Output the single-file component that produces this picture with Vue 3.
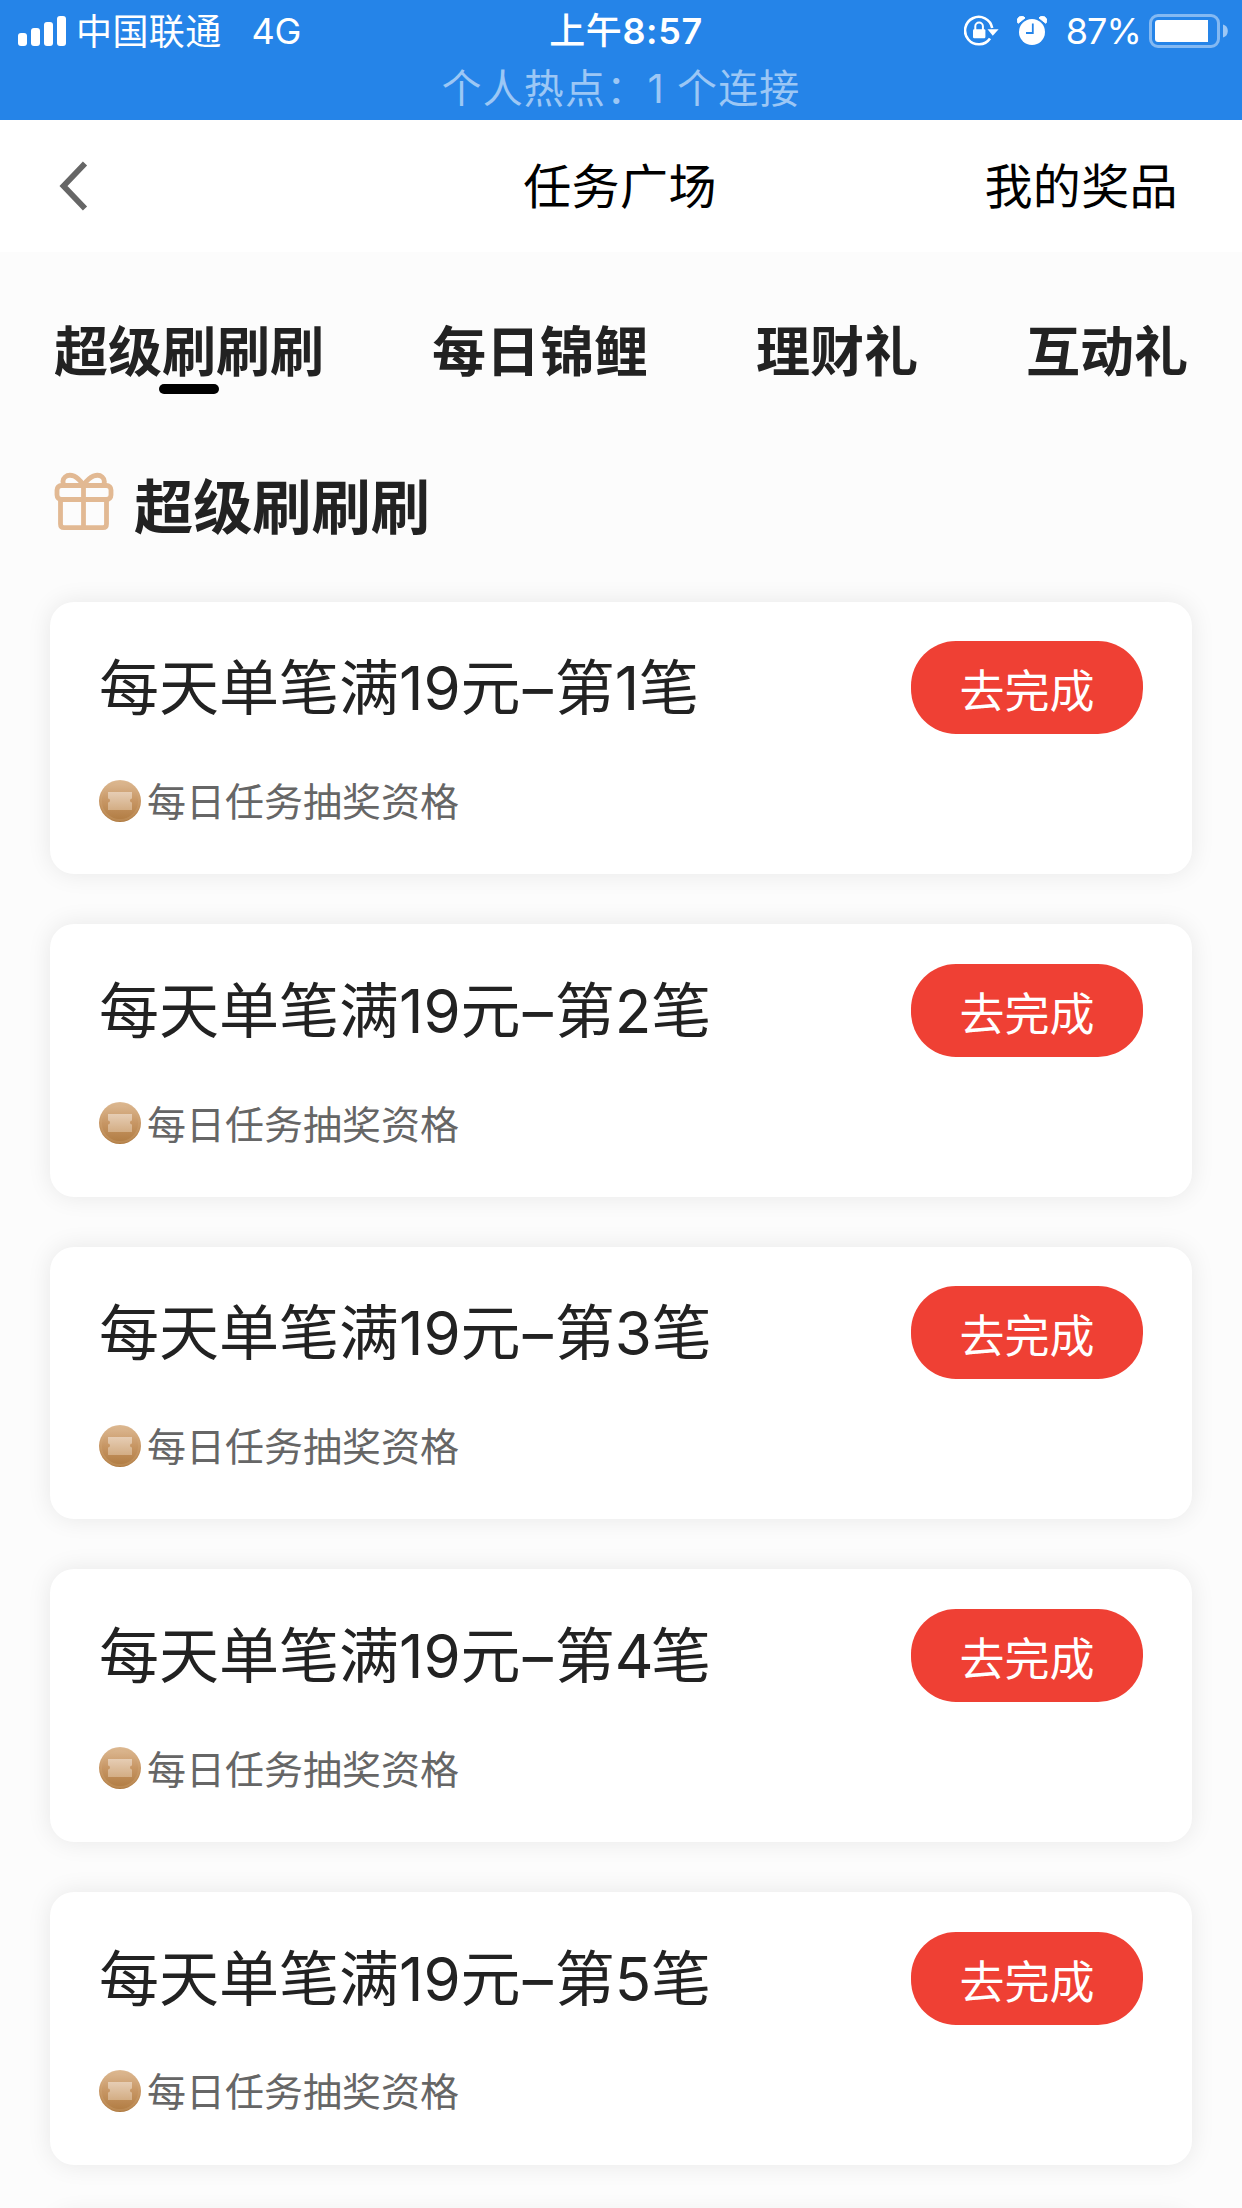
<script setup>
const tabs = ['超级刷刷刷', '每日锦鲤', '理财礼', '互动礼']
const activeTab = 0
const tasks = [1, 2, 3, 4, 5]
</script>

<template>
  <div class="page">
    <header class="status">
      <div class="status-row">
        <div class="status-left">
          <svg class="signal" width="48" height="30" viewBox="0 0 48 30" fill="#fff">
            <rect x="0" y="17" width="9" height="13" rx="3" />
            <rect x="13" y="12" width="9" height="18" rx="3" />
            <rect x="26" y="6" width="9" height="24" rx="3" />
            <rect x="39" y="0" width="9" height="30" rx="3" />
          </svg>
          <span class="carrier">中国联通</span>
          <span class="network">4G</span>
        </div>
        <div class="time"><span class="ampm">上午</span>8:57</div>
        <div class="status-right">
          <svg class="lock" width="35" height="32" viewBox="0 0 35 32">
            <path d="M28.2 13 A13.7 13.7 0 1 0 26 23.4" fill="none" stroke="#fff" stroke-width="2.6" />
            <path d="M23.5 14.2 H34.6 L28.8 20.8 Z" fill="#fff" />
            <rect x="9" y="14.3" width="12.4" height="8.9" rx="1.2" fill="#fff" />
            <path d="M11.3 15 V11.3 A3.8 3.8 0 0 1 18.9 11.3 V15" fill="none" stroke="#fff" stroke-width="2" />
          </svg>
          <svg class="alarm" width="30" height="30" viewBox="0 0 30 30">
            <circle cx="15" cy="16" r="13" fill="#fff" />
            <path d="M1.2 7.3 A4.1 4.1 0 0 1 8 1.9 Z M28.8 7.3 A4.1 4.1 0 0 0 22 1.9 Z" fill="#fff" stroke="#fff" stroke-width="1" stroke-linejoin="round" />
            <path d="M15.8 7.5 V17 H9" fill="none" stroke="#2584e8" stroke-width="1.8" />
          </svg>
          <span class="percent">87%</span>
          <svg class="battery" width="79" height="34" viewBox="0 0 79 34">
            <rect x="1.5" y="1.5" width="68" height="31" rx="7.5" fill="none" stroke="#84b9f2" stroke-width="3" />
            <path d="M9 6 H59 V28 H9 Q6 28 6 25 V9 Q6 6 9 6 Z" fill="#fff" />
            <path d="M74 10.5 A6.8 6.8 0 0 1 74 23.5 Z" fill="#9cc7f5" />
          </svg>
        </div>
      </div>
      <div class="hotspot">个人热点：<span class="count">1</span>个连接</div>
    </header>

    <nav class="nav">
      <svg class="back" width="30" height="50" viewBox="0 0 30 50">
        <path d="M26 2.5 L4.5 25 L26 47.5" fill="none" stroke="#666" stroke-width="5.8" />
      </svg>
      <h1 class="nav-title">任务广场</h1>
      <a class="nav-link">我的奖品</a>
    </nav>

    <main class="content">
      <div class="tabs">
        <div v-for="(tab, i) in tabs" :key="tab" class="tab" :class="{ active: i === activeTab }">{{ tab }}</div>
      </div>

      <div class="section-head">
        <svg class="gift" width="60" height="60" viewBox="0 0 60 60" fill="none" stroke="#e2b993" stroke-width="4.8">
          <rect x="3" y="13.5" width="54" height="14" rx="4.5" />
          <path d="M6.5 28 V52 Q6.5 55.6 10 55.6 H49 Q52.5 55.6 52.5 52 V28" />
          <path d="M29.5 13 V55" />
          <path d="M10 13.5 C6.5 6 13 1.5 20 4 C24.5 6 27 9.5 29.5 13 C32 9.5 35 6 39.5 4 C46.5 1.5 52.5 6 49.5 13.5" />
        </svg>
        <h2 class="section-title">超级刷刷刷</h2>
      </div>

      <div class="list">
        <section v-for="n in tasks" :key="n" class="card">
          <div class="card-top">
            <h3 class="card-title">每天单笔满19元<span class="dash">–</span>第<span :class="{ wide: n === 4 }">{{ n }}</span>笔</h3>
            <button class="go">去完成</button>
          </div>
          <div class="reward">
            <svg class="coin" width="42" height="42" viewBox="0 0 42 42">
              <defs>
                <linearGradient :id="'coin' + n" x1="0" y1="0" x2="0" y2="1">
                  <stop offset="0" stop-color="#debb96" />
                  <stop offset="0.5" stop-color="#c79664" />
                  <stop offset="1" stop-color="#af7a40" />
                </linearGradient>
                <linearGradient :id="'ticket' + n" x1="0" y1="0" x2="0" y2="1">
                  <stop offset="0" stop-color="#e6cdb4" />
                  <stop offset="1" stop-color="#d3ad84" />
                </linearGradient>
              </defs>
              <circle cx="21" cy="21" r="21" :fill="`url(#coin${n})`" />
              <circle cx="21" cy="21" r="19" fill="none" stroke="#d9ae80" stroke-opacity="0.25" stroke-width="2" />
              <path d="M9 12 H33 V18.5 A2 2 0 0 0 33 22.5 V30 H9 V22.5 A2 2 0 0 0 9 18.5 Z" :fill="`url(#ticket${n})`" />
            </svg>
            <span class="reward-text">每日任务抽奖资格</span>
          </div>
        </section>
        <section class="card"></section>
      </div>
    </main>
  </div>
</template>

<style>
html,
body {
  margin: 0;
  background: #fcfcfc;
}
</style>

<style scoped>
.page {
  width: 1242px;
  height: 2208px;
  overflow: hidden;
  display: flex;
  flex-direction: column;
  background: #fcfcfc;
  color: #222;
  font-family: Inter, 'Noto Sans CJK SC', sans-serif;
  white-space: nowrap;
}

h1,
h2,
h3 {
  margin: 0;
  font-weight: 400;
}

.status {
  flex: none;
  height: 120px;
  background: #2584e8;
  color: #fff;
}

.status-row {
  display: grid;
  grid-template-columns: 1fr auto 1fr;
  align-items: center;
  height: 62px;
  font-size: 36px;
  line-height: 62px;
}

.status-left {
  display: flex;
  align-items: center;
  padding-left: 18px;
}

.carrier {
  margin-left: 10px;
  padding-top: 2px;
  line-height: 60px;
  letter-spacing: 0.4px;
}

.network {
  margin-left: 30px;
  padding-top: 1px;
  line-height: 61px;
  letter-spacing: -0.3px;
}

.time {
  padding: 1px 0 0 10px;
  font-weight: 600;
  letter-spacing: 0.6px;
  line-height: 61px;
}

.ampm {
  font-weight: 500;
}

.status-right {
  display: flex;
  align-items: center;
  justify-content: flex-end;
  padding-right: 14px;
}

.alarm {
  margin-left: 18px;
}

.percent {
  margin-left: 19px;
  padding-top: 1px;
  line-height: 61px;
  letter-spacing: -0.9px;
}

.battery {
  margin-left: 8px;
}

.hotspot {
  height: 52px;
  padding-top: 1px;
  font-size: 40px;
  line-height: 52px;
  letter-spacing: 1.2px;
  text-align: center;
  color: #9cc7f5;
}

.count {
  margin-right: 12px;
}

.nav {
  flex: none;
  display: grid;
  grid-template-columns: 1fr auto 1fr;
  align-items: center;
  box-sizing: border-box;
  height: 132px;
  padding: 0 64px 0 59px;
  background: #fff;
  color: #000;
  letter-spacing: 0.4px;
}

.nav-title,
.nav-link {
  padding-top: 2px;
  font-size: 48px;
  line-height: 130px;
}

.nav-title {
  padding-left: 3px;
}

.nav-link {
  justify-self: end;
}

.content {
  padding: 0 50px;
}

.tabs {
  display: flex;
  justify-content: space-between;
  padding: 61px 4px 0;
  font-size: 54px;
  line-height: 80px;
  font-weight: 600;
}

.tab::after {
  content: '';
  display: block;
  width: 60px;
  height: 10px;
  margin: -9px auto 0;
  border-radius: 5px;
}

.tab.active::after {
  background: #000;
}

.section-head {
  display: flex;
  align-items: center;
  height: 80px;
  margin-top: 73px;
  padding-left: 4px;
}

.gift {
  margin: -10px 20px 0 0;
}

.section-title {
  padding-top: 2px;
  font-size: 59.2px;
  line-height: 80px;
  font-weight: 600;
}

.list {
  display: flex;
  flex-direction: column;
  gap: 50px;
  margin-top: 54.7px;
}

.card {
  box-sizing: border-box;
  height: 272.6px;
  padding: 39.5px 49px 0;
  border-radius: 24px;
  background: #fff;
  box-shadow: 0 0 24px rgba(0, 0, 0, 0.085);
}

.card-top {
  display: flex;
  justify-content: space-between;
  height: 93px;
}

.card-title {
  padding-top: 1px;
  font-size: 60px;
  line-height: 93px;
}

.dash {
  margin: 0 2px 0 2px;
}

.wide {
  margin-right: -2.5px;
}

.go {
  width: 232px;
  height: 93px;
  padding: 9px 0 0;
  border: 0;
  border-radius: 45px;
  background: #ef4034;
  color: #fff;
  font: 400 45px/84px Inter, 'Noto Sans CJK SC', sans-serif;
}

.reward {
  display: flex;
  align-items: center;
  margin-top: 35.4px;
  height: 62px;
  font-size: 39px;
  line-height: 62px;
  color: #666;
}

.reward-text {
  padding-top: 3px;
}

.coin {
  margin-right: 6px;
}
</style>
